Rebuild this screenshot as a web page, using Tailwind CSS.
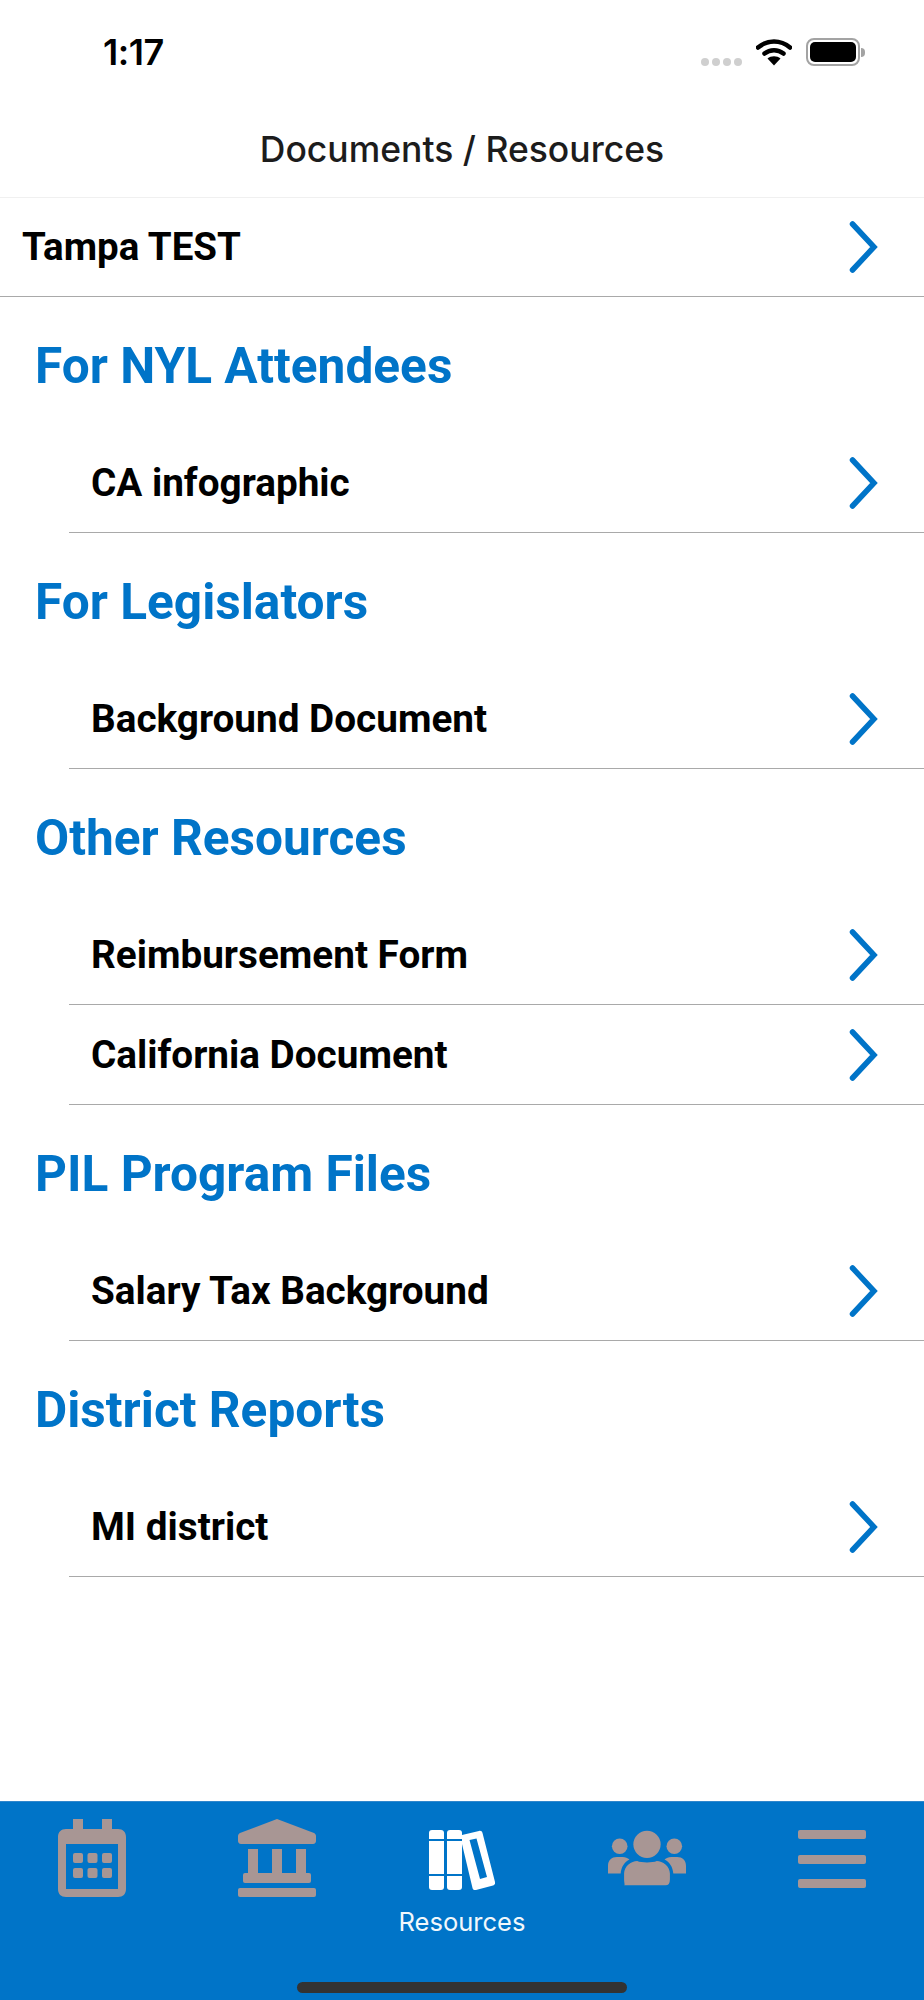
<!DOCTYPE html>
<html lang="en">
  <head>
    <meta charset="UTF-8" />
    <meta name="viewport" content="width=device-width, initial-scale=1.0" />
    <title>Documents / Resources</title>
    <script src="https://cdn.jsdelivr.net/npm/@tailwindcss/browser@4"></script>
  </head>

  <body class="bg-white font-['Roboto',sans-serif]">
    <div class="w-[924px] h-[2000px] flex flex-col overflow-hidden">
      <!-- Status bar -->
      <div class="h-[92px] shrink-0 flex items-center pl-[103px] pr-[59px] pt-[12px]">
        <span class="font-['Inter',sans-serif] font-semibold text-[36px] leading-none tracking-[-0.5px] text-black">1:17</span>
        <div class="ml-auto flex items-center">
          <div class="flex gap-[3px] mt-[20px] mr-[14px]">
            <span class="w-[8px] h-[8px] rounded-full bg-[#cfcfcf]"></span>
            <span class="w-[8px] h-[8px] rounded-full bg-[#cfcfcf]"></span>
            <span class="w-[8px] h-[8px] rounded-full bg-[#cfcfcf]"></span>
            <span class="w-[8px] h-[8px] rounded-full bg-[#cfcfcf]"></span>
          </div>
          <svg class="w-[36px] h-[28px] mr-[14px]" viewBox="0 0 36 28" fill="none">
            <path d="M2 9.5C11.5 1.5 24.500 1.500 34 9.500" stroke="#000" stroke-width="4.500" stroke-linecap="round"/>
            <path d="M8.500 15.500C14 11 22 11 27.500 15.500" stroke="#000" stroke-width="4.500" stroke-linecap="round"/>
            <path d="M11.500 20.500C15 17.500 21 17.500 24.500 20.500L18 27.500Z" fill="#000"/>
          </svg>
          <div class="w-[54px] h-[28px] rounded-[8px] border-2 border-[#a3a3a3] p-[2px]">
            <div class="w-full h-full rounded-[5px] bg-black"></div>
          </div>
          <span class="w-[4px] h-[9px] ml-[1px] rounded-r-full bg-[#a3a3a3]"></span>
        </div>
      </div>

      <!-- Title -->
      <div class="h-[106px] shrink-0 flex items-center justify-center border-b border-[#f0f0f0] pt-[10px]">
        <h1 class="font-['Inter',sans-serif] font-medium text-[35.5px] leading-none text-[#1c1c1c]">Documents / Resources</h1>
      </div>

      <!-- Event row -->
      <div class="h-[99px] shrink-0 flex items-center justify-between pl-[22px] pr-[44px] border-b border-[#a9a9a9]">
        <span class="font-bold text-[38.5px] leading-none text-black">Tampa TEST</span>
        <svg class="w-[32px] h-[52px]" viewBox="0 0 32 52" fill="none"><path d="M4.500 3L26 26L4.500 49" stroke="#0074c8" stroke-width="5.500" stroke-linecap="round" /></svg>
      </div>

      <!-- Document sections -->
      <main class="flex-1">
        <section>
          <h2 class="h-[136px] flex items-center pl-[35px] pt-[4px] font-bold text-[49.6px] leading-none text-[#0074c8]">For NYL Attendees</h2>
          <div class="ml-[69px] h-[100px] flex items-center justify-between pl-[22px] pr-[44px] border-b border-[#a9a9a9]">
            <span class="pt-[2px] font-bold text-[38.7px] leading-none text-black">CA infographic</span>
            <svg class="w-[32px] h-[52px]" viewBox="0 0 32 52" fill="none"><path d="M4.500 3L26 26L4.500 49" stroke="#0074c8" stroke-width="5.500" stroke-linecap="round" /></svg>
          </div>
        </section>
        <section>
          <h2 class="h-[136px] flex items-center pl-[35px] pt-[4px] font-bold text-[49.6px] leading-none text-[#0074c8]">For Legislators</h2>
          <div class="ml-[69px] h-[100px] flex items-center justify-between pl-[22px] pr-[44px] border-b border-[#a9a9a9]">
            <span class="pt-[2px] font-bold text-[38.7px] leading-none text-black">Background Document</span>
            <svg class="w-[32px] h-[52px]" viewBox="0 0 32 52" fill="none"><path d="M4.500 3L26 26L4.500 49" stroke="#0074c8" stroke-width="5.500" stroke-linecap="round" /></svg>
          </div>
        </section>
        <section>
          <h2 class="h-[136px] flex items-center pl-[35px] pt-[4px] font-bold text-[49.6px] leading-none text-[#0074c8]">Other Resources</h2>
          <div class="ml-[69px] h-[100px] flex items-center justify-between pl-[22px] pr-[44px] border-b border-[#a9a9a9]">
            <span class="pt-[2px] font-bold text-[38.7px] leading-none text-black">Reimbursement Form</span>
            <svg class="w-[32px] h-[52px]" viewBox="0 0 32 52" fill="none"><path d="M4.500 3L26 26L4.500 49" stroke="#0074c8" stroke-width="5.500" stroke-linecap="round" /></svg>
          </div>
          <div class="ml-[69px] h-[100px] flex items-center justify-between pl-[22px] pr-[44px] border-b border-[#a9a9a9]">
            <span class="pt-[2px] font-bold text-[38.7px] leading-none text-black">California Document</span>
            <svg class="w-[32px] h-[52px]" viewBox="0 0 32 52" fill="none"><path d="M4.500 3L26 26L4.500 49" stroke="#0074c8" stroke-width="5.500" stroke-linecap="round" /></svg>
          </div>
        </section>
        <section>
          <h2 class="h-[136px] flex items-center pl-[35px] pt-[4px] font-bold text-[49.6px] leading-none text-[#0074c8]">PIL Program Files</h2>
          <div class="ml-[69px] h-[100px] flex items-center justify-between pl-[22px] pr-[44px] border-b border-[#a9a9a9]">
            <span class="pt-[2px] font-bold text-[38.7px] leading-none text-black">Salary Tax Background</span>
            <svg class="w-[32px] h-[52px]" viewBox="0 0 32 52" fill="none"><path d="M4.500 3L26 26L4.500 49" stroke="#0074c8" stroke-width="5.500" stroke-linecap="round" /></svg>
          </div>
        </section>
        <section>
          <h2 class="h-[136px] flex items-center pl-[35px] pt-[4px] font-bold text-[49.6px] leading-none text-[#0074c8]">District Reports</h2>
          <div class="ml-[69px] h-[100px] flex items-center justify-between pl-[22px] pr-[44px] border-b border-[#a9a9a9]">
            <span class="pt-[2px] font-bold text-[38.7px] leading-none text-black">MI district</span>
            <svg class="w-[32px] h-[52px]" viewBox="0 0 32 52" fill="none"><path d="M4.500 3L26 26L4.500 49" stroke="#0074c8" stroke-width="5.500" stroke-linecap="round" /></svg>
          </div>
        </section>
      </main>

      <!-- Tab bar -->
      <nav class="relative h-[199px] shrink-0 bg-[#0074c8] border-t border-[#2f86cc] flex">
        <div class="flex-1 flex justify-center pt-[17px]">
          <svg class="w-[68px] h-[78px]" viewBox="0 0 68 78" fill="#a89694">
            <path fill-rule="evenodd" d="M15 0H25V10H44V0H54V10H60C65 10 68 13 68 18V70C68 75 65 78 60 78H8C3 78 0 75 0 70V18C0 13 3 10 8 10H15ZM8 25V70H60V25Z"/>
            <rect x="15" y="34" width="10" height="10" rx="2"/><rect x="29.500" y="34" width="10" height="10" rx="2"/><rect x="44" y="34" width="10" height="10" rx="2"/>
            <rect x="15" y="49" width="10" height="10" rx="2"/><rect x="29.500" y="49" width="10" height="10" rx="2"/><rect x="44" y="49" width="10" height="10" rx="2"/>
          </svg>
        </div>
        <div class="flex-1 flex justify-center pt-[17px]">
          <svg class="w-[78px] h-[78px]" viewBox="0 0 78 78" fill="#a89694">
            <path d="M39 0L76 14C77 14.500 78 15.500 78 17V22C78 23.500 77 25 75 25H3C1 25 0 23.500 0 22V17C0 15.500 1 14.500 2 14Z"/>
            <rect x="10" y="30" width="10" height="26"/><rect x="34" y="30" width="10" height="26"/><rect x="58" y="30" width="10" height="26"/>
            <rect x="5" y="54" width="68" height="10" rx="2"/>
            <rect x="0" y="69" width="78" height="9" rx="2"/>
          </svg>
        </div>
        <div class="flex-1 flex flex-col items-center pt-[28px]">
          <svg class="w-[66px] h-[60px]" viewBox="0 0 66 60" fill="#fff">
            <path d="M3 0H12C14 0 15 1 15 3V9H0V3C0 1 1 0 3 0Z"/><rect x="0" y="11" width="15" height="33"/><path d="M0 46H15V57C15 59 14 60 12 60H3C1 60 0 59 0 57Z"/>
            <path d="M21 0H30C32 0 33 1 33 3V9H18V3C18 1 19 0 21 0Z"/><rect x="18" y="11" width="15" height="33"/><path d="M18 46H33V57C33 59 32 60 30 60H21C19 60 18 59 18 57Z"/>
            <path fill-rule="evenodd" d="M33 5L50 1C52 .5 53 1.500 53.500 3L66 52C66.500 54 65.500 55 64 55.500L47 60C45 60.500 44 59.500 43.500 58L33 14ZM40.500 10L51 49L58 47L47.500 8.500Z"/>
          </svg>
          <span class="mt-[19px] font-['Inter',sans-serif] text-[25.5px] leading-none text-[#f2f8fc]">Resources</span>
        </div>
        <div class="flex-1 flex justify-center pt-[28px]">
          <svg class="w-[78px] h-[56px]" viewBox="0 0 80 56" fill="#a89694">
            <circle cx="40" cy="14" r="14"/><circle cx="12" cy="16" r="8"/><circle cx="68" cy="16" r="8"/>
            <path d="M16 56C18 56 16.500 54 16.500 50V44C16.500 36 24 31 30 31C34 33 46 33 50 31C56 31 63.500 36 63.500 44V50C63.500 54 62 56 59 56Z"/>
            <path d="M0 44V36C0 30 4 27 9 27H15C18 27 20 28 22 29.500C17 32 13.500 37 13 44Z"/>
            <path d="M80 44V36C80 30 76 27 71 27H65C62 27 60 28 58 29.500C63 32 66.500 37 67 44Z"/>
          </svg>
        </div>
        <div class="flex-1 flex justify-center pt-[28px]">
          <div class="w-[68px] h-[58px] flex flex-col justify-between">
            <span class="h-[9px] rounded-[2px] bg-[#a89694]"></span>
            <span class="h-[9px] rounded-[2px] bg-[#a89694]"></span>
            <span class="h-[9px] rounded-[2px] bg-[#a89694]"></span>
          </div>
        </div>
        <!-- Home indicator -->
        <span class="absolute left-[297px] bottom-[7px] w-[330px] h-[11px] rounded-full bg-[#333333]"></span>
      </nav>
    </div>
  </body>
</html>
